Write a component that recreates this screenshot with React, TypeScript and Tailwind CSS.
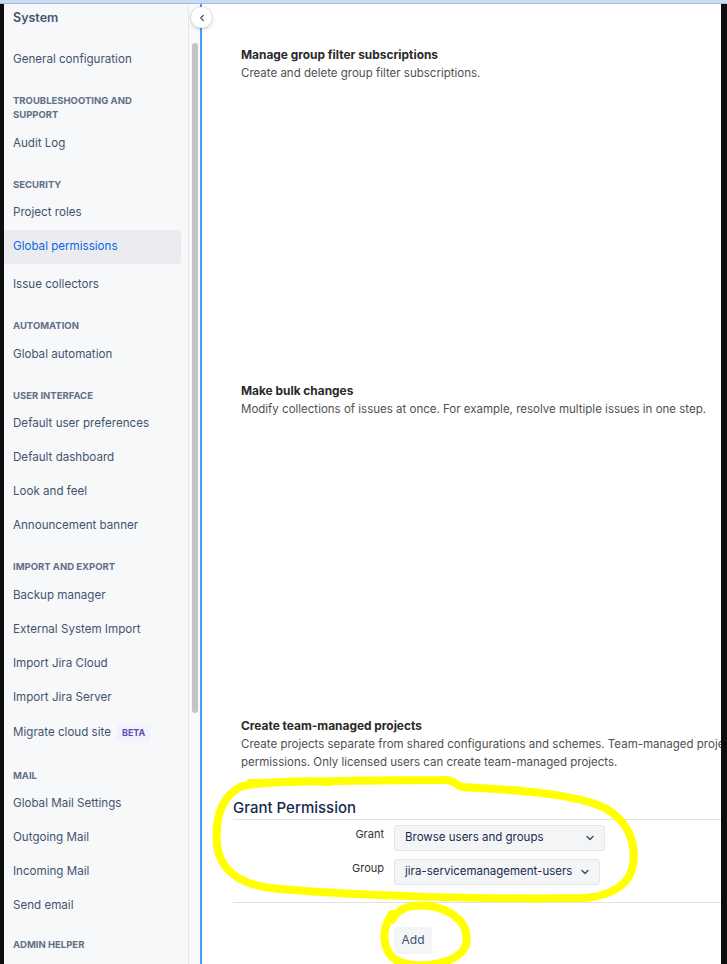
import { ChevronDown, ChevronLeft } from 'lucide-react';

type NavEntry =
  | { kind: 'heading'; label: string[]; tight?: boolean }
  | { kind: 'item'; label: string; selected?: boolean; badge?: string; extraTop?: boolean };

const nav: NavEntry[] = [
  { kind: 'item', label: 'General configuration' },
  { kind: 'heading', label: ['TROUBLESHOOTING AND', 'SUPPORT'] },
  { kind: 'item', label: 'Audit Log' },
  { kind: 'heading', label: ['SECURITY'] },
  { kind: 'item', label: 'Project roles' },
  { kind: 'item', label: 'Global permissions', selected: true },
  { kind: 'item', label: 'Issue collectors', extraTop: true },
  { kind: 'heading', label: ['AUTOMATION'] },
  { kind: 'item', label: 'Global automation' },
  { kind: 'heading', label: ['USER INTERFACE'] },
  { kind: 'item', label: 'Default user preferences' },
  { kind: 'item', label: 'Default dashboard' },
  { kind: 'item', label: 'Look and feel' },
  { kind: 'item', label: 'Announcement banner' },
  { kind: 'heading', label: ['IMPORT AND EXPORT'] },
  { kind: 'item', label: 'Backup manager' },
  { kind: 'item', label: 'External System Import' },
  { kind: 'item', label: 'Import Jira Cloud' },
  { kind: 'item', label: 'Import Jira Server' },
  { kind: 'item', label: 'Migrate cloud site', badge: 'BETA' },
  { kind: 'heading', label: ['MAIL'] },
  { kind: 'item', label: 'Global Mail Settings' },
  { kind: 'item', label: 'Outgoing Mail' },
  { kind: 'item', label: 'Incoming Mail' },
  { kind: 'item', label: 'Send email' },
  { kind: 'heading', label: ['ADMIN HELPER'], tight: true },
];

const permissions = [
  {
    title: 'Manage group filter subscriptions',
    lines: ['Create and delete group filter subscriptions.'],
    height: 'h-[336px]',
  },
  {
    title: 'Make bulk changes',
    lines: ['Modify collections of issues at once. For example, resolve multiple issues in one step.'],
    height: 'h-[335px]',
  },
  {
    title: 'Create team-managed projects',
    lines: [
      'Create projects separate from shared configurations and schemes. Team-managed projects have their own',
      'permissions. Only licensed users can create team-managed projects.',
    ],
    height: '',
  },
];

function Sidebar() {
  return (
    <div className="w-[184px] shrink-0 bg-[#f7f8f9] text-[#44546f]">
      <div className="h-[39px] pl-[9px] pt-[4px] text-[12.5px] font-semibold leading-[20px]">System</div>
      {nav.map((entry, i) =>
        entry.kind === 'heading' ? (
          <div
            key={i}
            className={`pl-[9px] pb-[5.5px] text-[9.5px] font-bold text-[#626f86] ${entry.tight ? 'pt-[15px]' : 'pt-[17px]'} ${
              entry.label.length > 1 ? 'leading-[13.5px]' : 'leading-[13px]'
            }`}
          >
            {entry.label.map(l => (
              <div key={l}>{l}</div>
            ))}
          </div>
        ) : (
          <div
            key={i}
            className={`flex items-center pl-[9px] text-[11.6px] w-[177px] rounded-r-[3px] ${
              entry.badge ? 'h-[37px]' : 'h-[34px]'
            } ${entry.extraTop ? 'mt-[4px]' : ''} ${entry.selected ? 'bg-[#ebecf0] text-[#0c66e4]' : ''}`}
          >
            {entry.label}
            {entry.badge && (
              <span className="ml-[6px] rounded-[3px] bg-[#f3f0ff] px-[5px] py-[2px] text-[9px] font-bold leading-[12px] text-[#5e4db2]">
                {entry.badge}
              </span>
            )}
          </div>
        )
      )}
    </div>
  );
}

function SelectBox({ value, width }: { value: string; width: string }) {
  return (
    <div
      className={`flex h-[26px] items-center justify-between whitespace-nowrap rounded-[3px] border border-[#e4e6ea] bg-[#f4f5f7] pl-[10px] pr-[8px] text-[11.5px] text-[#172b4d] ${width}`}
    >
      <span>{value}</span>
      <ChevronDown size={12} strokeWidth={3} className="text-[#42526e]" />
    </div>
  );
}

export default function App() {
  return (
    <div className="relative h-[964px] w-[727px] overflow-hidden bg-white font-['Inter',sans-serif]">
      <div className="h-[4px] border-b border-[#a9b9d0] bg-[#c9dbf5]" />
      <div className="flex h-[960px]">
        <div className="w-[4px] shrink-0 bg-[#0d0d0d]" />
        <Sidebar />
        <div className="w-[1px] shrink-0 bg-[#e6e7ea]" />
        <div className="flex w-[11px] shrink-0 justify-center bg-[#fafafa] pt-[39px]">
          <div className="h-[670px] w-[6px] rounded-full bg-[#c4c4c4]" />
        </div>
        <div className="w-[2px] shrink-0 bg-[#4c9aff]" />

        <div className="min-w-0 flex-1 overflow-hidden pl-[31px]">
          <div className="w-[700px] pt-[42px] pl-[8px] leading-[18px]">
            {permissions.map(p => (
              <div key={p.title} className={p.height}>
                <div className="text-[11.9px] font-bold text-[#292929]">{p.title}</div>
                {p.lines.map(l => (
                  <div key={l} className="whitespace-nowrap text-[11.5px] text-[#505050]">
                    {l}
                  </div>
                ))}
              </div>
            ))}
          </div>

          <div className="mt-[27px] w-[700px]">
            <div className="border-b border-[#dfe1e6] pb-[1px] text-[15px] font-medium leading-[20px] text-[#172b4d]">
              Grant Permission
            </div>
            <div className="grid grid-cols-[151px_auto] items-start gap-x-[10px] gap-y-[8px] pt-[5px] text-[11px] text-[#333]">
              <div className="pt-[1px] text-right">Grant</div>
              <SelectBox value="Browse users and groups" width="w-[211px]" />
              <div className="pt-[1px] text-right">Group</div>
              <SelectBox value="jira-servicemanagement-users" width="w-[206px]" />
            </div>
            <div className="mt-[17px] border-t border-[#dfe1e6] pt-[23px] pl-[161px]">
              <button className="h-[27px] w-[38px] rounded-[3px] bg-[#f4f5f7] text-[12px] text-[#42526e]">Add</button>
            </div>
          </div>
        </div>

        <div className="w-[6px] shrink-0 bg-[#0d0d0d]" />
      </div>

      <div className="absolute left-[191px] top-[7px] flex h-[21px] w-[21px] items-center justify-center rounded-full bg-white shadow-[0_0_0_1px_rgba(9,30,66,0.08),0_2px_4px_rgba(9,30,66,0.15)]">
        <ChevronLeft size={10} strokeWidth={3} className="text-[#44546f]" />
      </div>

      <svg className="pointer-events-none absolute left-0 top-0" width="727" height="964" fill="none">
        <path
          d="M250 783 C320 781 400 780 445 780 C452 779 455 784 462 787 C520 790 575 794 605 808 C630 822 636 845 633 865 C630 885 610 896 585 898 C480 900 340 895 270 888 C240 884 220 870 217 845 C215 820 220 798 240 787 C250 783 300 780 330 782"
          stroke="#ffff00"
          strokeWidth="8"
          strokeLinecap="round"
        />
        <path
          d="M392 914 C380 930 382 955 400 962 C425 970 460 962 466 945 C470 925 455 910 430 906 C410 904 398 908 392 920"
          stroke="#ffff00"
          strokeWidth="8"
          strokeLinecap="round"
        />
      </svg>
    </div>
  );
}
